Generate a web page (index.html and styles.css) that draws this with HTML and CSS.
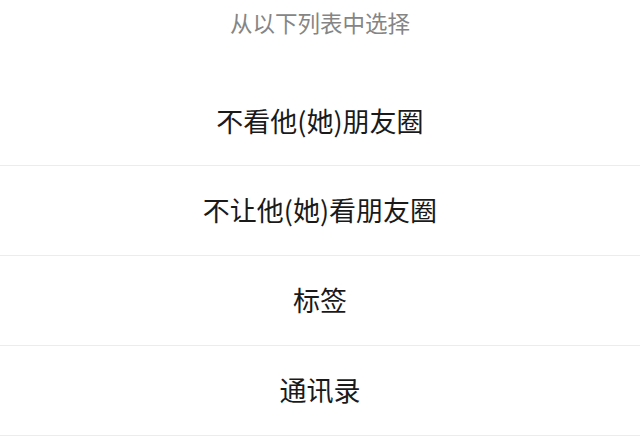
FILE: index.html
```html
<!DOCTYPE html>
<html lang="zh-CN">
<head>
  <meta charset="UTF-8">
  <title>从以下列表中选择</title>
  <link rel="stylesheet" href="styles.css">
</head>
<body>
  <div class="sheet">
    <div class="sheet-title">从以下列表中选择</div>
    <ul class="options">
      <li class="option">不看他(她)朋友圈</li>
      <li class="option">不让他(她)看朋友圈</li>
      <li class="option">标签</li>
      <li class="option">通讯录</li>
    </ul>
  </div>
</body>
</html>
```

FILE: styles.css
```css
body {
  margin: 0;
  background-color: #ffffff;
  font-family: "Noto Sans CJK SC", "Noto Sans", sans-serif;
}
.sheet {
  width: 640px;
  height: 436px;
  overflow: hidden;
}
.sheet-title {
  height: 44px;
  line-height: 44px;
  padding-bottom: 32px;
  text-align: center;
  font-size: 22.5px;
  color: #858585;
}
.options {
  list-style: none;
  margin: 0;
  padding: 0;
}
.option {
  height: 89px;
  line-height: 87px;
  border-bottom: 1px solid #ececec;
  text-align: center;
  font-size: 27px;
  color: #1a1a1a;
}
.option:first-child {
  line-height: 89px;
}
```
